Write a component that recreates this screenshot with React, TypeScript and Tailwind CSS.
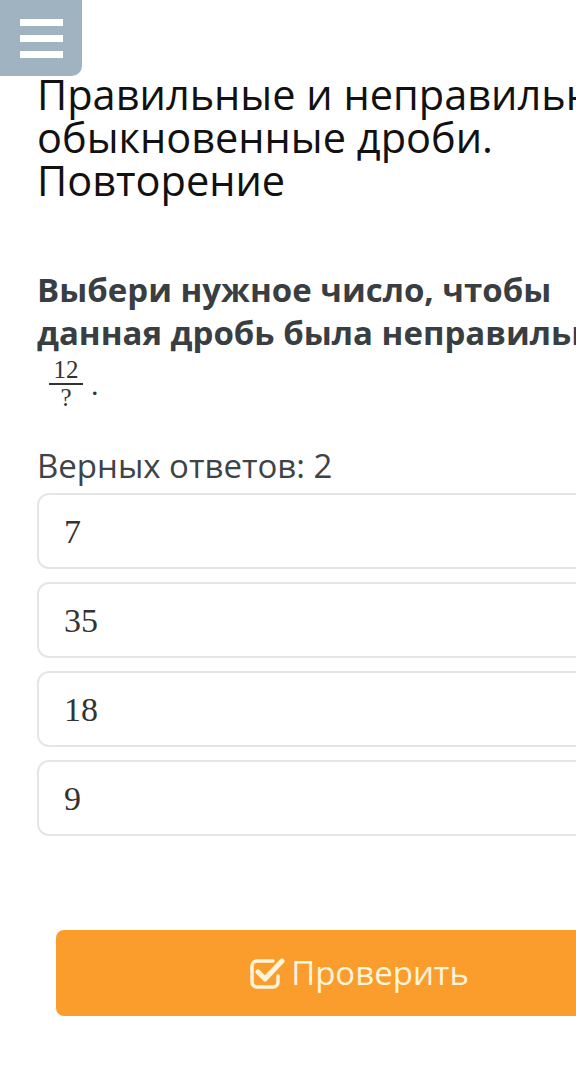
import React from 'react';

const options = ['7', '35', '18', '9'];

const CheckIcon: React.FC = () => (
  <svg width="36" height="32" viewBox="0 0 36 32" fill="none">
    <path
      d="M24 4H8a5 5 0 0 0-5 5v16a5 5 0 0 0 5 5h16a5 5 0 0 0 5-5v-6"
      stroke="currentColor"
      strokeWidth="3.5"
      strokeLinecap="round"
    />
    <path
      d="M9 15l7 7L33 4"
      stroke="currentColor"
      strokeWidth="5"
      strokeLinecap="round"
      strokeLinejoin="round"
    />
  </svg>
);

const App: React.FC = () => {
  return (
    <div className="relative h-[1082px] w-[576px] overflow-hidden bg-white font-['Open_Sans',sans-serif]">
      {/* menu button */}
      <div className="absolute left-0 top-0 z-10 flex h-[76px] w-[82px] flex-col items-center justify-center gap-[9px] rounded-br-[10px] bg-[#9fb3c1]">
        <span className="block h-[7px] w-[43px] bg-white" />
        <span className="block h-[7px] w-[43px] bg-white" />
        <span className="block h-[7px] w-[43px] bg-white" />
      </div>

      <div className="w-[720px] pl-[37px] pt-[73px]">
        <h1 className="w-[640px] text-[41.5px] leading-[43px] text-[#111]">
          Правильные и неправильные обыкновенные дроби. Повторение
        </h1>

        <p className="mt-[66px] w-[625px] text-[33px] font-bold leading-[43px] text-[#393e43]">
          Выбери нужное число, чтобы данная дробь была неправильной:
        </p>

        <div className="flex items-center pl-[12px] font-['Liberation_Serif',serif] text-[#333]">
          <div className="flex flex-col items-center">
            <span className="mt-[3px] text-[25px] leading-[26px]">12</span>
            <span className="block h-[2px] w-[34px] bg-[#333]" />
            <span className="text-[25px] leading-[26px]">?</span>
          </div>
          <span className="ml-[8px] mt-[4px] text-[30px] leading-none">.</span>
        </div>

        <p className="mt-[35px] text-[33px] leading-[40px] text-[#3e4348]">Верных ответов: 2</p>

        <div className="flex flex-col gap-[13px] pt-[7px]">
          {options.map((o) => (
            <div
              key={o}
              className="flex h-[76px] w-[640px] items-center rounded-[12px] border-2 border-[#e3e5e6] pl-[25px] font-['Liberation_Serif',serif] text-[34px] text-[#333]"
            >
              {o}
            </div>
          ))}
        </div>

        <div className="pl-[19px] pt-[94px]">
          <button className="flex h-[86px] w-[606px] items-center justify-center gap-[6px] rounded-[8px] bg-[#fa9d2c] text-[33px] text-[#fff4dc]">
            <CheckIcon />
            <span>Проверить</span>
          </button>
        </div>
      </div>
    </div>
  );
};

export default App;
